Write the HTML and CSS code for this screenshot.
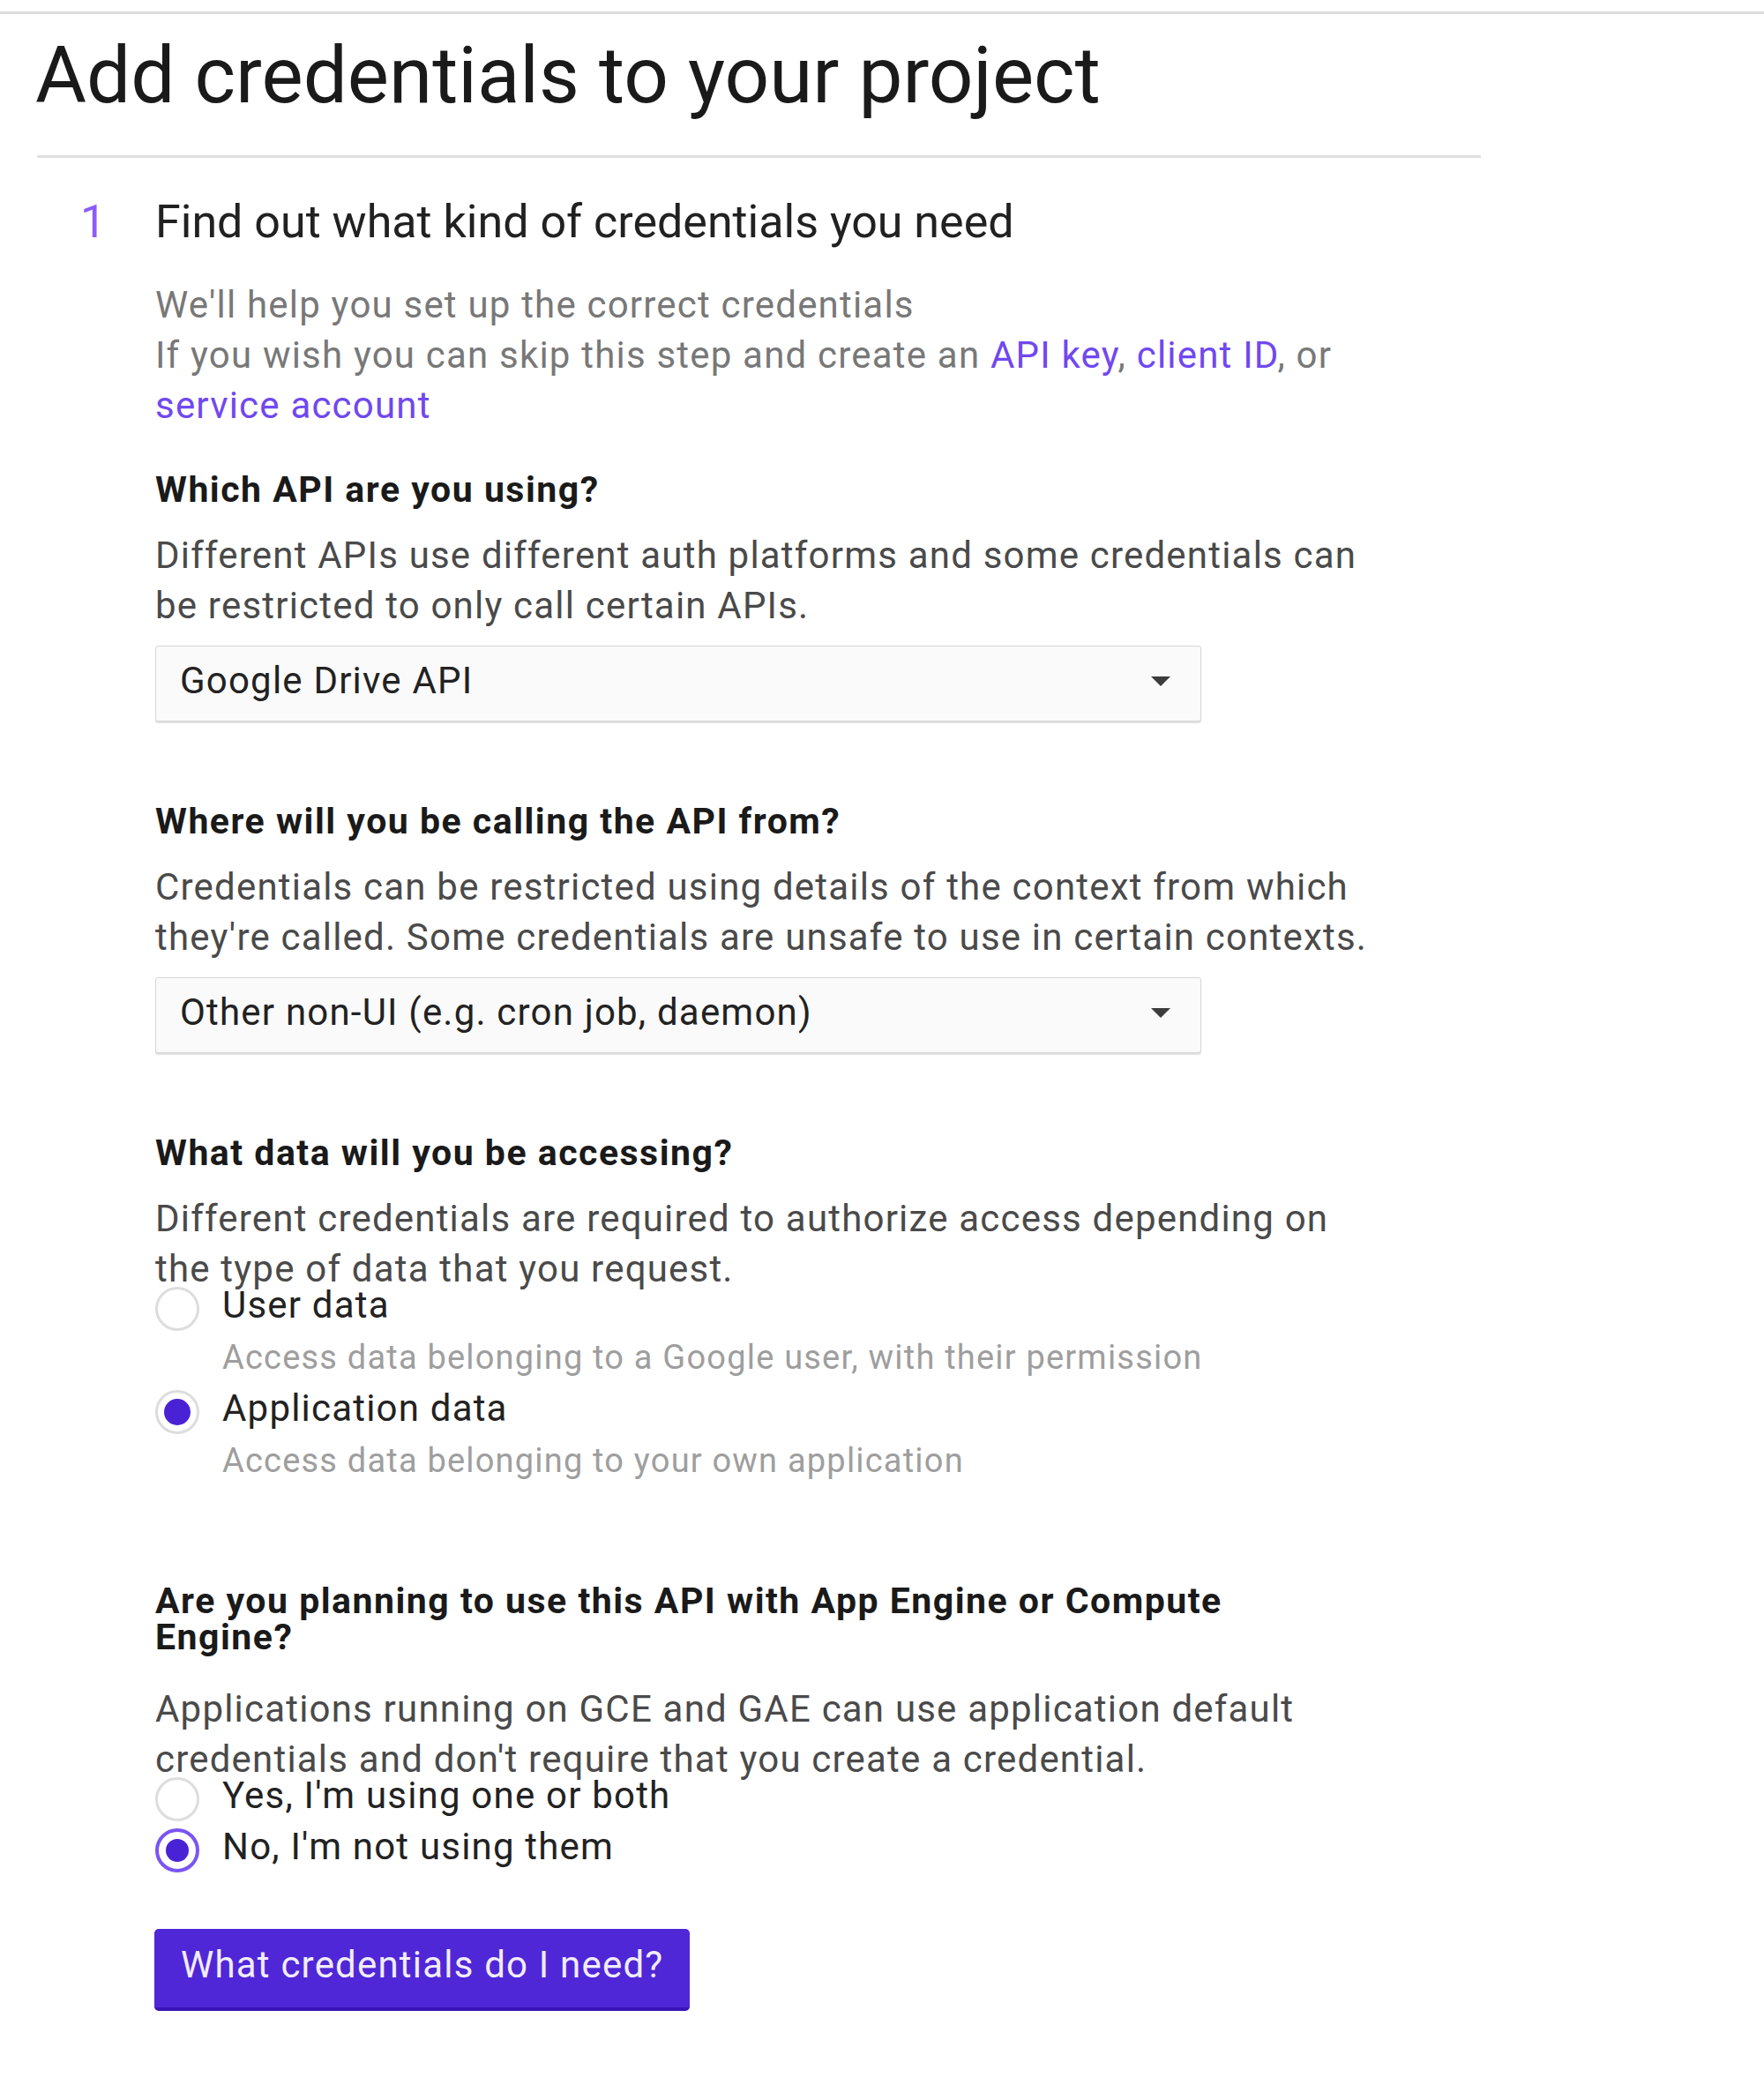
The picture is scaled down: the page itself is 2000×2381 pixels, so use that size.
FILE: index.html
```html
<!DOCTYPE html>
<html lang="en">
<head>
<meta charset="utf-8">
<title>Add credentials to your project</title>
<link rel="stylesheet" href="styles.css">
</head>
<body>
<div class="topline"></div>
<header class="header">
  <h1 class="title">Add credentials to your project</h1>
</header>
<div class="step">
  <span class="step-num">1</span>
  <h2 class="step-title">Find out what kind of credentials you need</h2>
  <div class="step-body">
    <p class="intro">We'll help you set up the correct credentials<br>If you wish you can skip this step and create an <a href="#">API key</a>, <a href="#">client ID</a>, or <a href="#">service account</a></p>

    <section class="question">
      <h3 class="q-title">Which API are you using?</h3>
      <p class="q-text">Different APIs use different auth platforms and some credentials can be restricted to only call certain APIs.</p>
      <div class="select"><span class="select-value">Google Drive API</span><svg class="select-arrow" width="22" height="11" viewBox="0 0 22 11"><path d="M0 0H22L11 11Z" fill="#3c3c3c"/></svg></div>
    </section>

    <section class="question">
      <h3 class="q-title">Where will you be calling the API from?</h3>
      <p class="q-text">Credentials can be restricted using details of the context from which they're called. Some credentials are unsafe to use in certain contexts.</p>
      <div class="select"><span class="select-value">Other non-UI (e.g. cron job, daemon)</span><svg class="select-arrow" width="22" height="11" viewBox="0 0 22 11"><path d="M0 0H22L11 11Z" fill="#3c3c3c"/></svg></div>
    </section>

    <section class="question">
      <h3 class="q-title">What data will you be accessing?</h3>
      <p class="q-text">Different credentials are required to authorize access depending on the type of data that you request.</p>
      <div class="radios">
        <div class="radio-item">
          <span class="radio"></span>
          <div class="radio-label">
            <div class="radio-title">User data</div>
            <div class="radio-desc">Access data belonging to a Google user, with their permission</div>
          </div>
        </div>
        <div class="radio-item">
          <span class="radio checked"></span>
          <div class="radio-label">
            <div class="radio-title">Application data</div>
            <div class="radio-desc">Access data belonging to your own application</div>
          </div>
        </div>
      </div>
    </section>

    <section class="question question-wrapped">
      <h3 class="q-title">Are you planning to use this API with App Engine or Compute Engine?</h3>
      <p class="q-text">Applications running on GCE and GAE can use application default credentials and don't require that you create a credential.</p>
      <div class="radios">
        <div class="radio-item">
          <span class="radio"></span>
          <div class="radio-label">
            <div class="radio-title">Yes, I'm using one or both</div>
          </div>
        </div>
        <div class="radio-item">
          <span class="radio checked focused"></span>
          <div class="radio-label">
            <div class="radio-title">No, I'm not using them</div>
          </div>
        </div>
      </div>
    </section>

    <button class="primary-btn" type="button">What credentials do I need?</button>
  </div>
</div>
</body>
</html>
```

FILE: styles.css
```css
html, body {
  margin: 0;
  padding: 0;
  background: #ffffff;
}

body {
  font-family: Roboto, "Liberation Sans", Arial, sans-serif;
  color: #212121;
  min-height: 2381px;
}

.topline {
  height: 3px;
  margin-top: 13px;
  background: #dcdcdc;
}

.header {
  margin-left: 42px;
  width: 1637px;
  padding: 15px 0 35px;
  border-bottom: 3px solid #e0e0e0;
}

.title {
  margin: 0 0 0 -2px;
  font-size: 89px;
  font-weight: 400;
  line-height: 110px;
  color: #1a1a1a;
}

.step {
  display: grid;
  grid-template-columns: 134px 1fr;
  margin: 41px 0 0 42px;
}

.step-num {
  padding-left: 49px;
  font-size: 52px;
  line-height: 64px;
  color: #8b5cf6;
}

.step-title {
  margin: 0;
  font-size: 52px;
  font-weight: 400;
  line-height: 64px;
  color: #212121;
}

.step-body {
  grid-column: 2;
}

.intro {
  margin: 33px 0 0;
  max-width: 1395px;
  font-size: 42px;
  line-height: 57px;
  letter-spacing: 1.2px;
  color: #787878;
}

.intro a {
  color: #7048f0;
  text-decoration: none;
}

.question {
  margin-top: 93px;
}

.intro + .question {
  margin-top: 47px;
}

.question.question-wrapped {
  margin-top: 110px;
}

.q-title {
  margin: 0;
  max-width: 1250px;
  font-size: 41px;
  font-weight: 700;
  line-height: 41px;
  letter-spacing: 1.5px;
  color: #1a1a1a;
}

.q-text {
  margin: 25px 0 0;
  max-width: 1395px;
  font-size: 42px;
  line-height: 57px;
  letter-spacing: 1.2px;
  color: #4a4a4a;
}

.question-wrapped .q-text {
  margin-top: 32px;
}

.select {
  display: flex;
  align-items: flex-start;
  justify-content: space-between;
  box-sizing: border-box;
  width: 1186px;
  margin-top: 17px;
  padding: 10px 34px 17px 27px;
  border: 1px solid #d6d6d6;
  border-radius: 3px;
  background: #fafafa;
  box-shadow: 0 2px 1px rgba(0, 0, 0, 0.12);
}

.select-value {
  font-size: 42px;
  line-height: 57px;
  letter-spacing: 1.2px;
  color: #222222;
}

.select-arrow {
  margin-top: 24px;
  flex: none;
}

.radios {
  display: flex;
  flex-direction: column;
  gap: 8px;
  margin-top: -8px;
}

.radio-item {
  display: grid;
  grid-template-columns: 76px 1fr;
  align-items: start;
}

.radio {
  display: flex;
  align-items: center;
  justify-content: center;
  box-sizing: border-box;
  width: 50px;
  height: 50px;
  border: 3px solid #dddddd;
  border-radius: 50%;
  background: #ffffff;
}

.radio.checked::after {
  content: "";
  width: 30px;
  height: 30px;
  border-radius: 50%;
  background: #4a22d6;
}

.radio.focused {
  border: 4px solid #7a55f2;
}

.radio.focused::after {
  width: 26px;
  height: 26px;
}

.radio-title {
  font-size: 42px;
  line-height: 41px;
  letter-spacing: 1.2px;
  color: #222222;
}

.radio-desc {
  margin-top: 10px;
  font-size: 38px;
  line-height: 58px;
  letter-spacing: 1.2px;
  color: #9e9e9e;
}

.primary-btn {
  display: inline-block;
  margin: 64px 0 0 -1px;
  padding: 12px 30px 20px 30px;
  border: 0;
  border-bottom: 4px solid #3a14b8;
  border-radius: 5px;
  background: #4f27d6;
  font-family: Roboto, "Liberation Sans", Arial, sans-serif;
  font-size: 42px;
  line-height: 57px;
  letter-spacing: 1.2px;
  color: #f2ecff;
  cursor: pointer;
}
```
